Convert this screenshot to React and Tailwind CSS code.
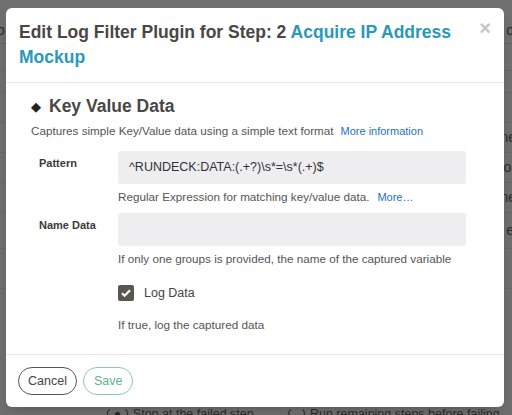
import React from "react";

const font = { fontFamily: '"Liberation Sans", Arial, sans-serif' };

// faint page behind the dimmed overlay
const BackgroundPage = () => (
  <div className="flex flex-col h-[415px] bg-[#6f6f6f] text-[#2b2b2b] text-[14px]">
    <div className="h-[44px] border-b border-[#626262] flex items-start pt-[20px]">
      <span className="-ml-[3px]">o</span>
      <span className="ml-auto -mr-[2px]">o</span>
    </div>
    <div className="h-[27px] border-b border-[#666]" />
    <div className="h-[22px] border-b border-[#666]" />
    <div className="h-[30px] border-b border-[#666]" />
    <div className="h-[30px] border-b border-[#666] flex items-center justify-end">
      <span className="-mr-[4px]">ne</span>
    </div>
    <div className="h-[30px] border-b border-[#666] flex items-center justify-end">
      <span className="-mr-[4px]">or</span>
    </div>
    <div className="h-[30px] border-b border-[#666] flex items-center justify-end">
      <span className="-mr-[4px]">ne</span>
    </div>
    <div className="h-[36px] border-b border-[#666] flex items-center justify-end">
      <span className="-mr-[2px]">e</span>
    </div>
    <div className="h-[40px] border-b border-[#666]" />
    <div className="flex-1" />
    <div className="h-[16px] flex items-start pl-[106px] gap-[4px] text-[12.5px] leading-[16px] whitespace-nowrap -mb-[7px]">
      <span>( ● )</span>
      <span>Stop at the failed step.</span>
      <span className="ml-[26px]">(&nbsp;&nbsp;&nbsp;)</span>
      <span>Run remaining steps before failing.</span>
    </div>
  </div>
);

const Field = ({ label, value, help, link }) => (
  <div className="grid grid-cols-[87px_1fr]">
    <div className="pl-[8px] pt-[4px] text-[11px] font-bold text-[#3a3a3a]">{label}</div>
    <div className="pr-[38px]">
      <div className="h-[33px] bg-[#eeeef1] rounded-[3px] flex items-center px-[11px] text-[12.5px] text-[#333]">
        {value}
      </div>
      <div className="mt-[5px] text-[11.7px] text-[#555] leading-[16px]">
        {help}
        {link && <span className="ml-[8px] text-[11px] text-[#2571c7]">{link}</span>}
      </div>
    </div>
  </div>
);

export default function App() {
  return (
    <div className="relative w-[512px] h-[415px] overflow-hidden" style={font}>
      <BackgroundPage />
      <div className="absolute left-[6px] top-[8px] w-[498px] h-[399px] bg-white rounded-[6px] shadow-lg flex flex-col">
        <div className="relative border-b border-[#e5e5e5] pt-[12px] pb-[12px] pl-[13px] pr-[40px]">
          <h1 className="text-[17.5px] leading-[25px] font-bold text-[#4a4644]">
            Edit Log Filter Plugin for Step: 2{" "}
            <span className="text-[#2b98bb]">Acquire IP Address Mockup</span>
          </h1>
          <span className="absolute right-[13px] top-[8px] text-[20px] font-bold text-[#c4c4c4] leading-[24px]">
            ×
          </span>
        </div>
        <div className="flex-1 pl-[25px] pt-[12px]">
          <div className="flex items-center gap-[8px] h-[22px]">
            <span className="text-[13px] text-[#222] leading-none">◆</span>
            <span className="text-[17.5px] font-bold text-[#4a4644]">Key Value Data</span>
          </div>
          <div className="mt-[6px] text-[11.7px] text-[#555] leading-[16px]">
            Captures simple Key/Value data using a simple text format
            <span className="ml-[7px] text-[11px] text-[#2571c7]">More information</span>
          </div>
          <div className="mt-[12px] flex flex-col gap-[8px]">
            <Field
              label="Pattern"
              value="^RUNDECK:DATA:(.+?)\s*=\s*(.+)$"
              help="Regular Expression for matching key/value data."
              link="More…"
            />
            <Field
              label="Name Data"
              value=""
              help="If only one groups is provided, the name of the captured variable"
            />
          </div>
          <div className="ml-[87px] mt-[18px]">
            <div className="flex items-center gap-[10px] h-[16px]">
              <span className="w-[16px] h-[16px] rounded-[2px] bg-[#5c5651] flex items-center justify-center">
                <svg width="12" height="12" viewBox="0 0 12 12">
                  <path d="M2 6.2l2.6 2.6L10 3.2" fill="none" stroke="#fff" strokeWidth="2.2" />
                </svg>
              </span>
              <span className="text-[12.5px] text-[#444]">Log Data</span>
            </div>
            <div className="mt-[16px] text-[11.7px] text-[#555] leading-[16px]">
              If true, log the captured data
            </div>
          </div>
        </div>
        <div className="border-t border-[#e5e5e5] h-[53px] flex items-center gap-[6px] pl-[12px]">
          <button className="h-[28px] px-[9px] rounded-full border border-[#555] text-[12.5px] text-[#444]">
            Cancel
          </button>
          <button className="h-[28px] px-[10px] rounded-full border border-[#86cfa6] text-[12.5px] text-[#5bb887]">
            Save
          </button>
        </div>
      </div>
    </div>
  );
}
